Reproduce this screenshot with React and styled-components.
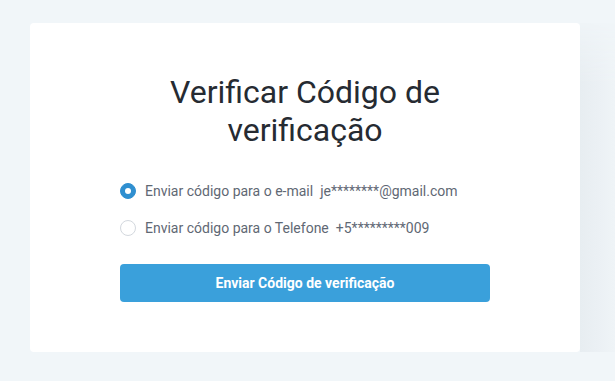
import React, { useState } from "react";
import styled, { createGlobalStyle } from "styled-components";

const Global = createGlobalStyle`
  html, body { margin: 0; padding: 0; }
  body {
    background: #f1f6f9;
    font-family: Roboto, "Liberation Sans", sans-serif;
  }
  * { box-sizing: border-box; }
`;

const Page = styled.div`
  display: flex;
  align-items: stretch;
  padding: 23px 0 0 30px;
  height: 381px;
  overflow: hidden;
`;

const Wrap = styled.div`
  display: flex;
  align-items: stretch;
  height: 329px;
`;

const Card = styled.div`
  width: 550px;
  background: #ffffff;
  border-radius: 4px;
  padding: 50px 90px 50px;
  display: flex;
  flex-direction: column;
`;

const Side = styled.div`
  width: 35px;
  background: linear-gradient(to right, #e7edf1 0%, #ebf0f4 50%, #eff4f7 100%);
  -webkit-mask-image: linear-gradient(to bottom, rgba(0,0,0,0.2) 0px, #000 60px);
  mask-image: linear-gradient(to bottom, rgba(0,0,0,0.2) 0px, #000 60px);
`;

const Title = styled.h1`
  margin: 0 0 32px;
  font-size: 32px;
  line-height: 38px;
  font-weight: 400;
  color: #262b32;
  text-align: center;
  padding: 0 30px;
`;

const Options = styled.div`
  display: flex;
  flex-direction: column;
  gap: 17px;
  margin-bottom: 26px;
`;

const Row = styled.label`
  display: flex;
  align-items: center;
  height: 20px;
  font-size: 14px;
  color: #5f6874;
  cursor: pointer;
`;

const Radio = styled.span`
  width: 16px;
  height: 16px;
  border-radius: 50%;
  margin-right: 9px;
  flex: none;
  display: flex;
  align-items: center;
  justify-content: center;
  background: ${(p) => (p.$checked ? "#2f8fd0" : "#ffffff")};
  border: 1px solid ${(p) => (p.$checked ? "#2f8fd0" : "#d3d8de")};
  &::after {
    content: "";
    width: 6px;
    height: 6px;
    border-radius: 50%;
    background: #fff;
    display: ${(p) => (p.$checked ? "block" : "none")};
  }
`;

const Value = styled.span`
  margin-left: 7px;
`;

const Button = styled.button`
  height: 38px;
  width: 100%;
  border: none;
  border-radius: 4px;
  background: #3aa0db;
  color: #ffffff;
  font-family: Roboto, "Liberation Sans", sans-serif;
  font-size: 14px;
  font-weight: 700;
  cursor: pointer;
`;

export default function App() {
  const [sel, setSel] = useState("email");
  return (
    <>
      <Global />
      <Page>
        <Wrap>
          <Card>
            <Title>Verificar Código de verificação</Title>
            <Options>
              <Row onClick={() => setSel("email")}>
                <Radio $checked={sel === "email"} />
                Enviar código para o e-mail
                <Value>je********@gmail.com</Value>
              </Row>
              <Row onClick={() => setSel("phone")}>
                <Radio $checked={sel === "phone"} />
                Enviar código para o Telefone
                <Value>+5*********009</Value>
              </Row>
            </Options>
            <Button>Enviar Código de verificação</Button>
          </Card>
          <Side />
        </Wrap>
      </Page>
    </>
  );
}
